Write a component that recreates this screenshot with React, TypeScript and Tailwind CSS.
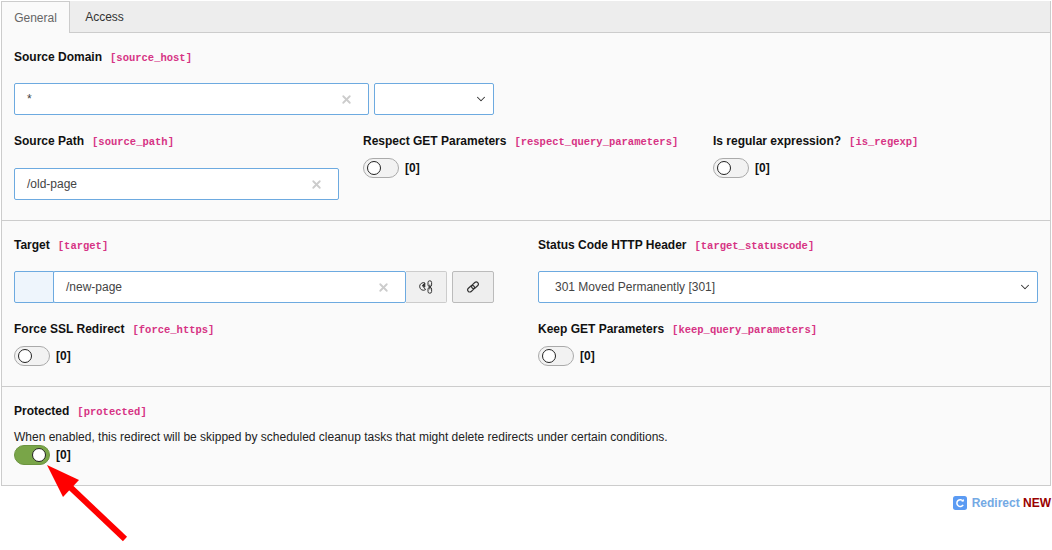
import { ChevronDown, X } from "lucide-react";

function Label({ title, field }: { title: string; field: string }) {
  return (
    <div className="flex h-[18px] items-baseline gap-2 whitespace-nowrap leading-[18px]">
      <span className="text-[12px] font-bold text-[#111]">{title}</span>
      <code className="font-['Liberation_Mono',monospace] text-[10.5px] font-bold text-[#d63384]">[{field}]</code>
    </div>
  );
}

function Toggle({ on }: { on?: boolean }) {
  return (
    <div className="flex h-5 items-center gap-1.5">
      <div
        className={
          on
            ? "flex h-5 w-9 items-center justify-end rounded-full border border-[#6c9440] bg-[#79a548] px-[3px]"
            : "flex h-5 w-9 items-center rounded-full border border-[#aaa] bg-[#f2f2f2] px-[3px]"
        }
      >
        <div className="h-[14px] w-[14px] rounded-full border border-[#222] bg-white" />
      </div>
      <span className="text-[12px] font-bold text-[#111]">[0]</span>
    </div>
  );
}

function ClearableInput({ value, width }: { value: string; width: string }) {
  return (
    <div className={`flex h-8 items-center justify-between rounded-[2px] border border-[#6daae0] bg-white pl-3 pr-[15px] text-[12px] text-[#444] ${width}`}>
      <span>{value}</span>
      <X size={13} strokeWidth={3.4} className="text-[#ccc]" />
    </div>
  );
}

function PageLinkIcon() {
  return (
    <svg width="16" height="14" viewBox="0 0 16 14" fill="none" stroke="#333" strokeWidth="1">
      <path d="M7 3 A3.8 3.8 0 1 0 7.6 9.6 L5 6.4 Z" />
      <path d="M4.4 5.4 L6.8 3.4 L6.8 7 Z" fill="#333" />
      <rect x="10" y="0.8" width="3.6" height="5.8" rx="1.7" />
      <rect x="10" y="7.4" width="3.6" height="5.8" rx="1.7" />
      <path d="M11.8 4.6 L11.8 9.4" />
    </svg>
  );
}

function ChainIcon() {
  return (
    <svg width="14" height="14" viewBox="0 0 14 14" fill="none" stroke="#333" strokeWidth="1.2">
      <g transform="rotate(-42 7 7)">
        <rect x="0.6" y="4.9" width="7.6" height="4.2" rx="2.1" />
        <rect x="5.8" y="4.9" width="7.6" height="4.2" rx="2.1" />
      </g>
    </svg>
  );
}

export default function App() {
  return (
    <div className="relative h-[550px] w-[1052px] overflow-hidden bg-white font-['Liberation_Sans',Arial,sans-serif]">
      <div className="ml-px mt-px w-[1050px] border border-t-0 border-[#ccc] bg-[#fafafa]">
        <div className="flex h-8 border-b border-[#ccc] bg-[#ededed] text-[12px]">
          <div className="-mb-px flex h-8 w-[68px] items-center justify-center border-r border-t border-[#ccc] bg-[#fafafa] text-[#666]">
            General
          </div>
          <div className="flex w-[69px] items-center justify-center text-[#333]">Access</div>
        </div>

        <div className="h-[188px] border-b border-[#ccc] px-3 pt-[15px]">
          <Label title="Source Domain" field="source_host" />
          <div className="mt-[17px] flex gap-[5px]">
            <ClearableInput value="*" width="w-[355px]" />
            <div className="flex h-8 w-[120px] items-center justify-end rounded-[2px] border border-[#6daae0] bg-white pr-[5px]">
              <ChevronDown size={14} strokeWidth={1.8} className="text-[#333]" />
            </div>
          </div>
          <div className="mt-[17px] grid grid-cols-[349px_350px_1fr]">
            <div>
              <Label title="Source Path" field="source_path" />
              <div className="mt-[18px]">
                <ClearableInput value="/old-page" width="w-[325px]" />
              </div>
            </div>
            <div>
              <Label title="Respect GET Parameters" field="respect_query_parameters" />
              <div className="mt-[8px]">
                <Toggle />
              </div>
            </div>
            <div>
              <Label title="Is regular expression?" field="is_regexp" />
              <div className="mt-[8px]">
                <Toggle />
              </div>
            </div>
          </div>
        </div>

        <div className="h-[166px] border-b border-[#ccc] px-3 pt-[15px]">
          <div className="grid grid-cols-[524px_1fr]">
            <div>
              <Label title="Target" field="target" />
              <div className="mt-[17px] flex">
                <div className="h-8 w-10 rounded-l-[2px] border border-[#6daae0] bg-[#eef5fc]" />
                <div className="-ml-px">
                  <ClearableInput value="/new-page" width="w-[353px]" />
                </div>
                <div className="flex h-8 w-[41px] items-center justify-center rounded-r-[2px] border border-l-0 border-[#ccc] bg-[#f0f0f0]">
                  <PageLinkIcon />
                </div>
                <div className="ml-[5px] flex h-8 w-[42px] items-center justify-center rounded-[2px] border border-[#bbb] bg-[#eee]">
                  <ChainIcon />
                </div>
              </div>
            </div>
            <div>
              <Label title="Status Code HTTP Header" field="target_statuscode" />
              <div className="mt-[17px] flex h-8 w-[500px] items-center justify-between rounded-[2px] border border-[#6daae0] bg-white pl-4 pr-[5px] text-[12px] text-[#444]">
                <span>301 Moved Permanently [301]</span>
                <ChevronDown size={14} strokeWidth={1.8} className="text-[#333]" />
              </div>
            </div>
          </div>
          <div className="mt-[17px] grid grid-cols-[524px_1fr]">
            <div>
              <Label title="Force SSL Redirect" field="force_https" />
              <div className="mt-[8px]">
                <Toggle />
              </div>
            </div>
            <div>
              <Label title="Keep GET Parameters" field="keep_query_parameters" />
              <div className="mt-[8px]">
                <Toggle />
              </div>
            </div>
          </div>
        </div>

        <div className="h-[98px] px-3 pt-[15px]">
          <Label title="Protected" field="protected" />
          <p className="mt-[10px] h-[14px] text-[12px] leading-[14px] text-[#222]">
            When enabled, this redirect will be skipped by scheduled cleanup tasks that might delete redirects under certain conditions.
          </p>
          <div className="mt-px">
            <Toggle on />
          </div>
        </div>
      </div>

      <div className="mt-[9px] flex h-[16px] items-center justify-end gap-[5px] pr-px text-[12px] font-bold">
        <svg width="14" height="14" viewBox="0 0 14 14">
          <rect width="14" height="14" rx="2.5" fill="#5b9bf3" />
          <path d="M10 5 A3.4 3.4 0 1 0 10.2 8.8" fill="none" stroke="#fff" strokeWidth="1.5" />
          <path d="M8.2 5.6 L10.9 5.6 L10.9 3 Z" fill="#fff" />
        </svg>
        <span>
          <span className="text-[#74a9e4]">Redirect</span> <span className="text-[#990000]">NEW</span>
        </span>
      </div>

      <svg className="absolute left-0 top-0" width="1052" height="550" fill="none">
        <path d="M125 539 L68 485" stroke="#ff0000" strokeWidth="6" />
        <path d="M47 465 L79 480 L63 497 Z" fill="#ff0000" />
      </svg>
    </div>
  );
}
